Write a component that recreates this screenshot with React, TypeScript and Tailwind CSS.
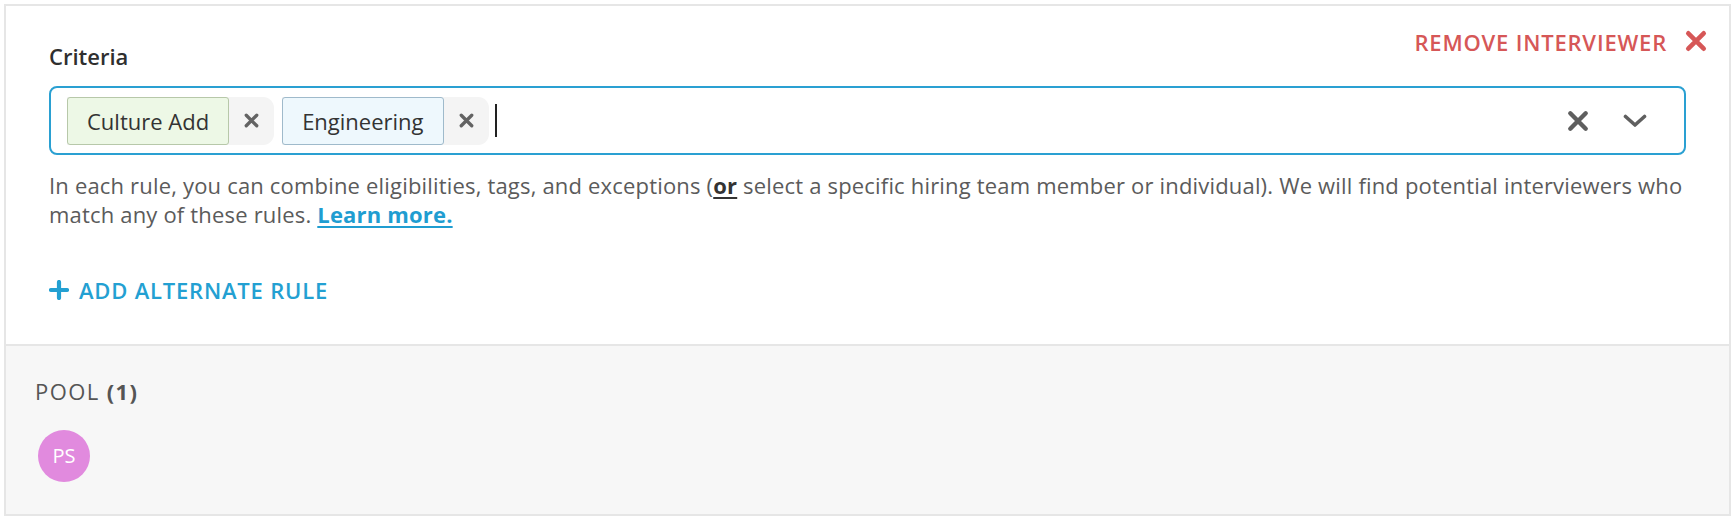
import { useState } from 'react';

type Tag = {
  id: string;
  label: string;
  tone: 'green' | 'blue';
};

const INITIAL_TAGS: Tag[] = [
  { id: 'culture-add', label: 'Culture Add', tone: 'green' },
  { id: 'engineering', label: 'Engineering', tone: 'blue' },
];

function CrossIcon({ className, size, weight }: { className: string; size: number; weight: number }) {
  return (
    <svg width={size} height={size} viewBox="0 0 20 20" className={className} fill="none">
      <path d="M3 3 L17 17 M17 3 L3 17" stroke="currentColor" strokeWidth={weight} strokeLinecap="round" />
    </svg>
  );
}

function ChevronIcon() {
  return (
    <svg width="24" height="14" viewBox="0 0 24 14" fill="none" className="text-[#5f5f5f]">
      <path d="M2.5 2.5 L12 11 L21.5 2.5" stroke="currentColor" strokeWidth="3.6" strokeLinecap="round" strokeLinejoin="round" />
    </svg>
  );
}

function TagChip({ tag, onRemove }: { tag: Tag; onRemove: () => void }) {
  const toneClass =
    tag.tone === 'green'
      ? 'bg-[#edf8e6] border-[#b7c8a9]'
      : 'bg-[#eef8fd] border-[#9fbacb]';

  return (
    <div className="flex h-[48px] items-stretch rounded-r-[11px] bg-[#f4f4f4]">
      <span className={`flex items-center rounded-[3px] border px-[19px] text-[22px] leading-[30px] text-[#333] ${toneClass}`}>
        {tag.label}
      </span>
      <button
        type="button"
        onClick={onRemove}
        className="flex w-[45px] items-center justify-center text-[#636363]"
      >
        <CrossIcon className="" size={15} weight={4.4} />
      </button>
    </div>
  );
}

export default function App() {
  const [tags, setTags] = useState<Tag[]>(INITIAL_TAGS);

  const removeTag = (id: string) => {
    setTags((prev) => prev.filter((t) => t.id !== id));
  };

  return (
    <div className="min-h-screen bg-white pl-[4px] pt-[4px] font-['Open_Sans',sans-serif]">
      <div className="w-[1727px] border-2 border-[#e6e6e6]">
        {/* Criteria editor */}
        <section className="bg-white px-[43px] pt-[21px] pb-[39px]">
          <div className="flex items-start justify-between">
            <h3 className="pt-[14px] text-[22px] font-semibold leading-[30px] text-[#2f2f2f]">Criteria</h3>
            <button
              type="button"
              className="-mr-[21px] flex items-center gap-[18px] text-[22px] font-semibold uppercase leading-[30px] tracking-[0.8px] text-[#d65757]"
            >
              Remove Interviewer
              <CrossIcon className="-mt-[2px]" size={22} weight={4.2} />
            </button>
          </div>

          <div className="mt-[15px] flex h-[69px] items-center rounded-[8px] border-2 border-[#2aa0d2] pl-[16px] pr-[37px]">
            <div className="flex flex-1 items-center gap-[8px]">
              {tags.map((tag) => (
                <TagChip key={tag.id} tag={tag} onRemove={() => removeTag(tag.id)} />
              ))}
              <span className="ml-[-2px] h-[33px] w-[2px] bg-[#222]" />
            </div>
            <div className="flex items-center gap-[34px]">
              <button type="button" className="text-[#5f5f5f]" onClick={() => setTags([])}>
                <CrossIcon className="" size={22} weight={4} />
              </button>
              <ChevronIcon />
            </div>
          </div>

          <p className="mt-[16px] text-[22px] leading-[29px] tracking-[0.18px] text-[#5b5b5b]">
            In each rule, you can combine eligibilities, tags, and exceptions (
            <span className="font-bold text-[#333] underline underline-offset-[3px]">or</span> select a specific
            hiring team member or individual). We will find potential interviewers who match any of these rules.{' '}
            <a href="#" className="font-bold text-[#1f9dd1] underline underline-offset-[3px]">
              Learn more.
            </a>
          </p>

          <button
            type="button"
            className="mt-[46px] flex items-center gap-[10px] text-[22px] font-semibold uppercase leading-[30px] tracking-[0.8px] text-[#23a0d2]"
          >
            <svg width="20" height="20" viewBox="0 0 20 20" fill="none">
              <path d="M10 2 V18 M2 10 H18" stroke="currentColor" strokeWidth="4.2" strokeLinecap="round" />
            </svg>
            Add Alternate Rule
          </button>
        </section>

        {/* Matching pool */}
        <section className="border-t-2 border-[#e6e6e6] bg-[#f7f7f7] px-[29px] pt-[30px] pb-[32px]">
          <div className="text-[22px] leading-[30px] tracking-[1.4px] text-[#555]">
            POOL <span className="font-bold">({1})</span>
          </div>
          <div className="mt-[24px] ml-[3px] flex h-[52px] w-[52px] items-center justify-center rounded-full bg-[#e18ade] text-[20px] font-medium text-white">
            PS
          </div>
        </section>
      </div>
    </div>
  );
}
